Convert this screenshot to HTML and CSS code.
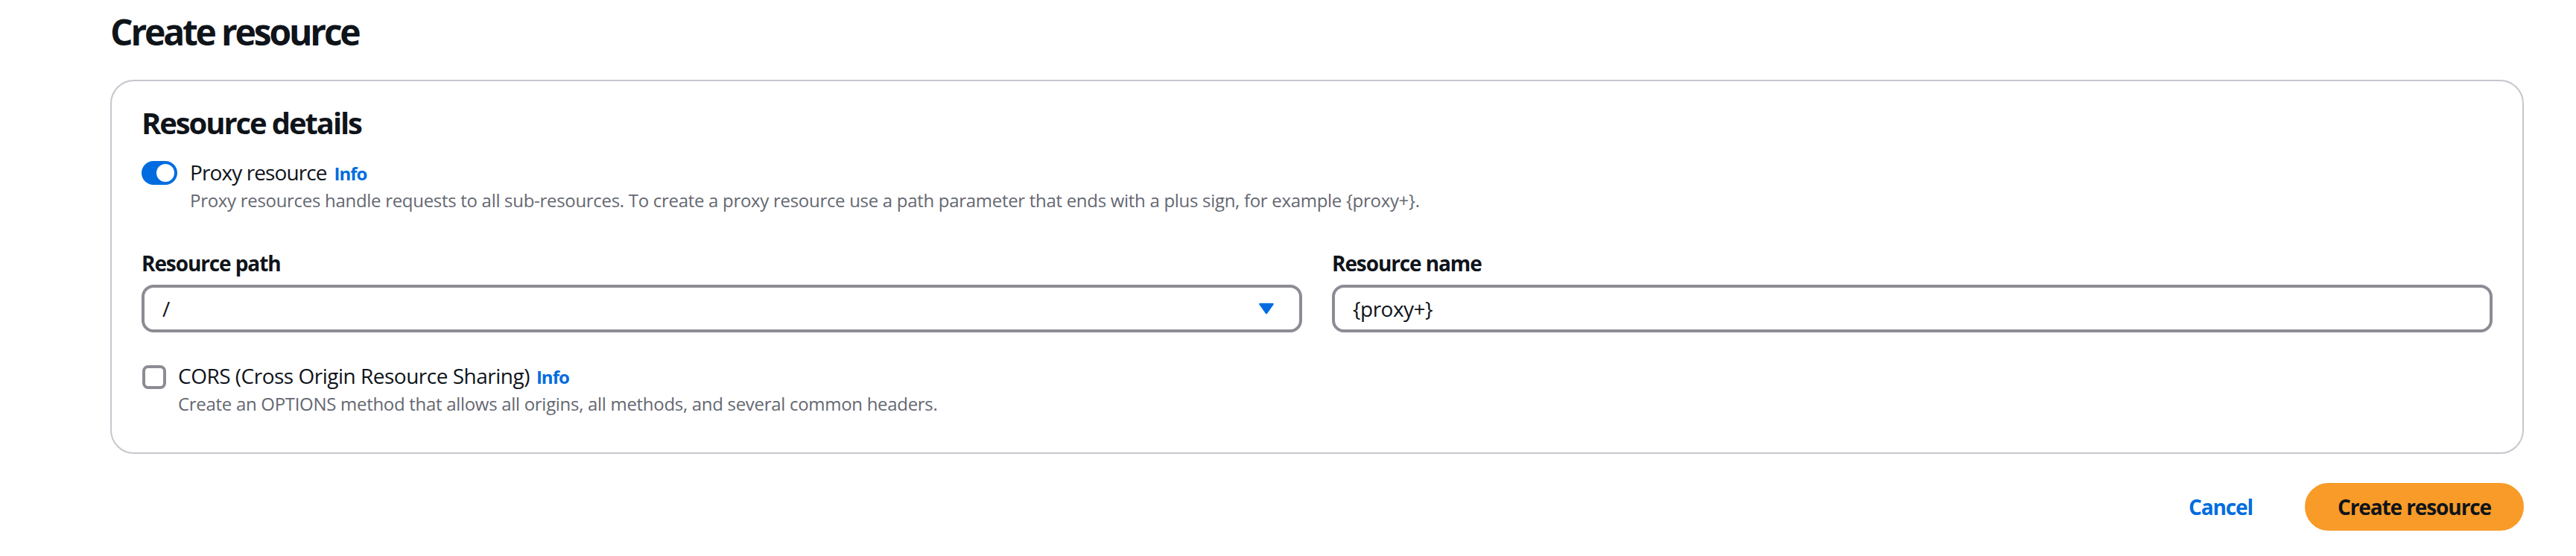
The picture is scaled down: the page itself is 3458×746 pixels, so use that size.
FILE: index.html
```html
<!DOCTYPE html>
<html lang="en">
<head>
<meta charset="utf-8">
<title>Create resource</title>
<link rel="stylesheet" href="styles.css">
</head>
<body>
<main class="page">
  <h1 class="page-title">Create resource</h1>
  <section class="card">
    <h2 class="card-title">Resource details</h2>

    <div class="choice choice-toggle">
      <span class="toggle" aria-hidden="true"><span class="knob"></span></span>
      <div class="choice-text">
        <div class="choice-label choice-label-proxy">Proxy resource<a class="info" href="#">Info</a></div>
        <div class="choice-desc">Proxy resources handle requests to all sub-resources. To create a proxy resource use a path parameter that ends with a plus sign, for example {proxy+}.</div>
      </div>
    </div>

    <div class="fields">
      <div class="field">
        <div class="field-label">Resource path</div>
        <div class="control select">
          <span class="value">/</span>
          <span class="caret" aria-hidden="true">
            <svg width="32" height="32" viewBox="0 0 32 32"><path d="M7.5 10 L24.5 10 L16 22 Z" fill="#006ce0" stroke="#006ce0" stroke-width="2.5" stroke-linejoin="round"/></svg>
          </span>
        </div>
      </div>
      <div class="field">
        <div class="field-label">Resource name</div>
        <div class="control input">
          <span class="value">{proxy+}</span>
        </div>
      </div>
    </div>

    <div class="choice choice-check">
      <span class="checkbox" aria-hidden="true"></span>
      <div class="choice-text">
        <div class="choice-label">CORS (Cross Origin Resource Sharing)<a class="info info-cors" href="#">Info</a></div>
        <div class="choice-desc">Create an OPTIONS method that allows all origins, all methods, and several common headers.</div>
      </div>
    </div>
  </section>

  <div class="actions">
    <a class="btn btn-link" href="#">Cancel</a>
    <a class="btn btn-primary" href="#">Create resource</a>
  </div>
</main>
</body>
</html>
```

FILE: styles.css
```css
* { box-sizing: border-box; }

html, body {
  margin: 0;
  padding: 0;
  background: #ffffff;
}

body {
  font-family: "Open Sans", "Noto Sans", "Liberation Sans", sans-serif;
  color: #0f141a;
}

.page {
  width: 3388px;
  padding: 13px 0 0 148px;
}

.page-title {
  margin: 0;
  font-size: 48px;
  line-height: 60px;
  font-weight: 700;
  letter-spacing: -3.2px;
  color: #0f141a;
}

.card {
  margin-top: 34px;
  border: 2px solid #c6c6cd;
  border-radius: 32px;
  padding: 32px 40px 49px 40px;
  background: #ffffff;
}

.card-title {
  margin: 0;
  font-size: 40px;
  line-height: 48px;
  font-weight: 700;
  letter-spacing: -2.1px;
  color: #0f141a;
}

.choice {
  display: flex;
  align-items: flex-start;
}

.choice-toggle { margin-top: 22px; }
.choice-check { margin-top: 38px; }

.toggle {
  flex: none;
  width: 48px;
  height: 32px;
  margin-top: 5px;
  margin-right: 17px;
  border-radius: 16px;
  background: #006ce0;
  display: flex;
  align-items: center;
  justify-content: flex-end;
  padding-right: 4px;
}

.knob {
  width: 24px;
  height: 24px;
  border-radius: 50%;
  background: #ffffff;
}

.checkbox {
  flex: none;
  width: 32px;
  height: 32px;
  margin-top: 6px;
  margin-left: 1px;
  margin-right: 16px;
  border: 4px solid #8c8c94;
  border-radius: 8px;
  background: #ffffff;
}

.choice-label {
  font-size: 28px;
  line-height: 40px;
  font-weight: 400;
  letter-spacing: -0.5px;
  color: #0f141a;
}

.choice-label-proxy { letter-spacing: -0.9px; }

.choice-desc {
  font-size: 24px;
  line-height: 32px;
  letter-spacing: -0.3px;
  color: #656871;
}

.info {
  margin-left: 10px;
  font-size: 24px;
  font-weight: 700;
  letter-spacing: -1px;
  color: #006ce0;
  text-decoration: none;
}

.info-cors { margin-left: 9px; }

.fields {
  margin-top: 48px;
  display: grid;
  grid-template-columns: 1fr 1fr;
  column-gap: 40px;
}

.field-label {
  font-size: 28px;
  line-height: 40px;
  font-weight: 700;
  letter-spacing: -1.1px;
  color: #0f141a;
}

.control {
  margin-top: 9px;
  height: 64px;
  border: 4px solid #8c8c94;
  border-radius: 16px;
  padding: 0 24px;
  display: flex;
  align-items: center;
  font-size: 28px;
  letter-spacing: -0.5px;
  color: #0f141a;
}

.control .value { flex: 1; }

.caret {
  flex: none;
  width: 32px;
  height: 32px;
  margin-right: 4px;
}

.caret svg { display: block; }

.actions {
  margin-top: 39px;
  display: flex;
  justify-content: flex-end;
  align-items: center;
  gap: 26px;
}

.btn {
  display: inline-block;
  height: 64px;
  border: 4px solid transparent;
  padding: 8px 40px;
  border-radius: 32px;
  font-size: 28px;
  line-height: 40px;
  font-weight: 700;
  letter-spacing: -1.1px;
  text-decoration: none;
}

.btn-link { color: #006ce0; }

.btn-primary {
  background: #f89b28;
  border-color: #f89b28;
  color: #0f141a;
}
```
